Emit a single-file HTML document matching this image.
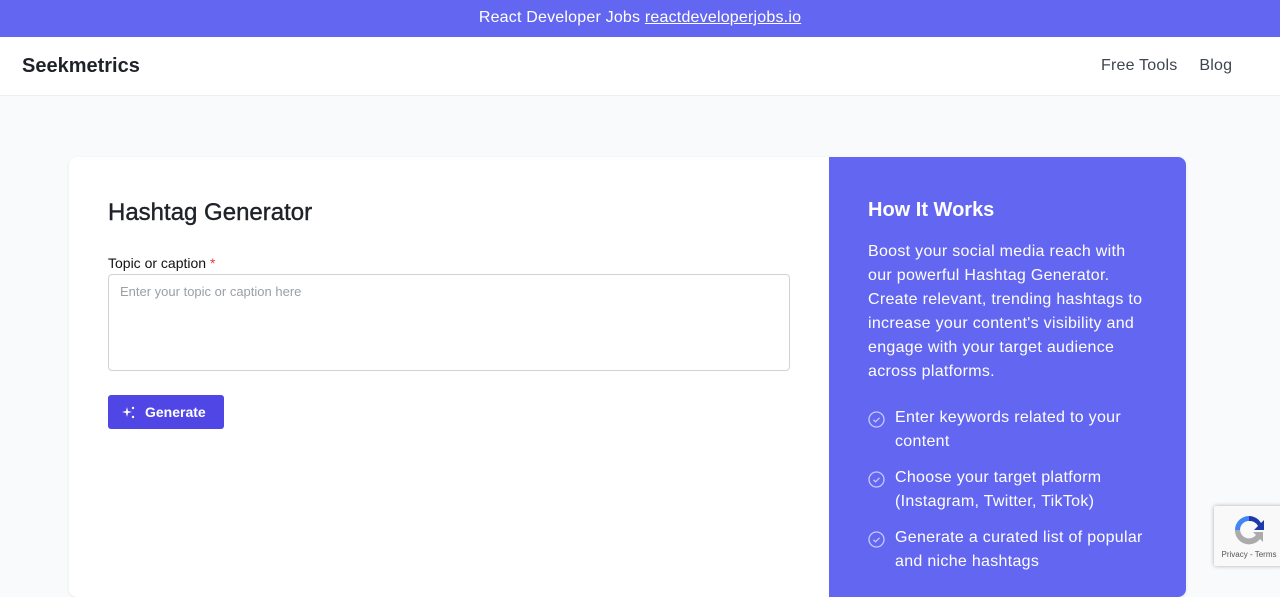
<!DOCTYPE html>
<html><head><style>
*{box-sizing:border-box;margin:0;padding:0}
body{width:1280px;height:578px;overflow:hidden;background:#f9fafb;font-family:"Liberation Sans",sans-serif;position:relative}
.top{height:37px;background:#6366f1;color:#fff;text-align:center;font-size:16px;line-height:36px;letter-spacing:.2px}
.top u{text-decoration:underline}
.nav{height:59px;background:#fff;border-bottom:1px solid #eceef1;position:relative}
.logo{position:absolute;left:22px;top:18px;font-size:20px;font-weight:bold;color:#1f2328}
.links{position:absolute;left:1101px;top:20px;font-size:16px;color:#3f4550;letter-spacing:.2px}
.links span{margin-right:22px}
.card{position:absolute;left:69px;top:157px;width:1117px;height:440px;background:#fff;border-radius:8px;box-shadow:0 1px 3px rgba(0,0,0,.08);overflow:hidden}
.right{position:absolute;left:760px;top:0;width:357px;height:440px;background:#6366f1;color:#fff;padding:40px 39px}
h1{position:absolute;left:39px;top:42px;font-size:24px;font-weight:normal;color:#1f2328;-webkit-text-stroke:.4px #1f2328}
.lab{position:absolute;left:39px;top:98px;font-size:14px;color:#111}
.ta{position:absolute;left:39px;top:117px;width:682px;height:97px;border:1px solid #cfd3d8;border-radius:4px;padding:9px 11px;font-size:13px;color:#9aa0a6}
.btn{position:absolute;left:39px;top:238px;width:116px;height:34px;background:#4f46e5;border-radius:3px;color:#fff;font-size:14px;font-weight:bold;line-height:34px;padding-left:37px}
.right h2{font-size:20px;font-weight:bold;margin-top:2px}
.right p{font-size:16px;line-height:24px;margin-top:18px;letter-spacing:.3px;width:276px}
.li{position:relative;padding-left:27px;font-size:16px;line-height:24px;margin-top:12px;letter-spacing:.3px}
.li svg{position:absolute;left:0;top:5px}
.rc{position:absolute;left:1214px;top:506px;width:70px;height:60px;background:#f9f9f9;box-shadow:0 0 4px rgba(0,0,0,.3);border-radius:2px;font-size:8px;color:#555;text-align:center}
</style></head><body>
<div class="top">React Developer Jobs <u>reactdeveloperjobs.io</u></div>
<div class="nav"><div class="logo">Seekmetrics</div><div class="links"><span>Free Tools</span><span>Blog</span></div></div>
<div class="card">
<h1>Hashtag Generator</h1>
<div class="lab">Topic or caption <span style="color:#e53e3e">*</span></div>
<div class="ta">Enter your topic or caption here</div>
<div class="btn"><svg style="position:absolute;left:14px;top:11px" width="13" height="13" viewBox="0 0 13 13" fill="#fff"><path d="M5 1L6 5 10 6 6 7 5 11 4 7 0 6 4 5Z"/><circle cx="11" cy="2" r="1.2"/><circle cx="11" cy="11" r="1.2"/></svg>Generate</div>
<div class="right">
<h2>How It Works</h2>
<p>Boost your social media reach with our powerful Hashtag Generator. Create relevant, trending hashtags to increase your content's visibility and engage with your target audience across platforms.</p>
<div style="margin-top:22px">
<div class="li"><svg width="17" height="17" viewBox="0 0 17 17" fill="none" stroke="#c7c9fb" stroke-width="1.3"><circle cx="8.5" cy="8.5" r="7.5"/><path d="M5.5 8.8l2 2 4-4"/></svg>Enter keywords related to your content</div>
<div class="li"><svg width="17" height="17" viewBox="0 0 17 17" fill="none" stroke="#c7c9fb" stroke-width="1.3"><circle cx="8.5" cy="8.5" r="7.5"/><path d="M5.5 8.8l2 2 4-4"/></svg>Choose your target platform (Instagram, Twitter, TikTok)</div>
<div class="li"><svg width="17" height="17" viewBox="0 0 17 17" fill="none" stroke="#c7c9fb" stroke-width="1.3"><circle cx="8.5" cy="8.5" r="7.5"/><path d="M5.5 8.8l2 2 4-4"/></svg>Generate a curated list of popular and niche hashtags</div>
</div>
</div>
</div>
<div class="rc"><svg width="36" height="36" viewBox="0 0 36 36" style="margin-top:6px"><path d="M18 4a14 14 0 0 1 12 7l3-3v10H23l4-4a9 9 0 0 0-9-5z" fill="#1c3aa9"/><path d="M4 18A14 14 0 0 1 18 4v5a9 9 0 0 0-9 9z" fill="#4285f4"/><path d="M4 18h5a9 9 0 0 0 16 5l-3-3h10v10l-3-3A14 14 0 0 1 4 18z" fill="#ababab"/></svg><div>Privacy - Terms</div></div>
</body></html>
